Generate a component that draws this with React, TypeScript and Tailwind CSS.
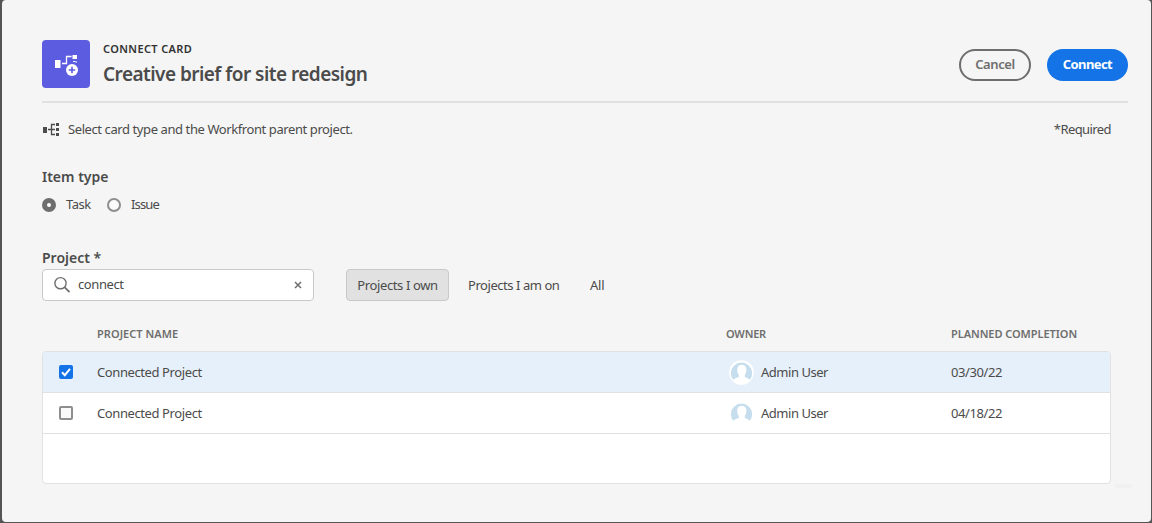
import React from "react";

function ConnectIcon() {
  return (
    <svg width="48" height="48" viewBox="0 0 48 48" fill="none" className="shrink-0 rounded bg-[#5c5ce0]">
      <rect x="13" y="20" width="5.5" height="8" fill="#fff" />
      <path d="M20 23.5h4.500v-7h5" stroke="#fff" strokeWidth="1.300" />
      <rect x="30.500" y="15" width="4.500" height="4" fill="#fff" />
      <path d="M31 21.300l4 .8" stroke="#fff" strokeWidth="1" />
      <circle cx="30" cy="30" r="6" fill="#fff" />
      <path d="M30 26.800v6.400M26.800 30h6.400" stroke="#5c5ce0" strokeWidth="1.600" />
    </svg>
  );
}

function TreeIcon() {
  return (
    <svg width="18" height="16" viewBox="0 0 18 16" fill="none" className="shrink-0">
      <path d="M1 6h4v6H1zM14 2h3v3h-3zM14 7h3v3h-3zM14 12h3v3h-3z" fill="#4b4b4b" />
      <path d="M6 8.500h7M13 3.500H9.500v10H13" stroke="#4b4b4b" strokeWidth="1.300" />
    </svg>
  );
}

function Avatar({ ring }: { ring?: boolean }) {
  return (
    <svg width="25" height="25" viewBox="0 0 25 25" className="shrink-0">
      {ring && <circle cx="12.500" cy="12.500" r="12.300" fill="#fff" />}
      <path d="M4.200 19.800A10.600 10.600 0 1 1 20.800 19.800Q19.500 18.200 15.800 17v-2.200c1.200-1.200 1.600-3 1.600-5.200 0-3-1.900-4.800-4.600-4.800S8.200 6.600 8.200 9.600c0 2.200.4 4 1.600 5.200V17Q5.500 18.200 4.200 19.800z" fill="#c5dded" />
    </svg>
  );
}

function Row({ checked, date }: { checked?: boolean; date: string }) {
  return (
    <div className={`flex h-[41px] items-center border-b border-[#e1e1e1] ${checked ? "bg-[#e6f0fa]" : "bg-white"}`}>
      <div className="w-[54px] pl-4">
        {checked ? (
          <svg width="14" height="14" viewBox="0 0 14 14" fill="none" className="rounded-xs bg-[#1473e6]">
            <path d="M3 7.200l2.800 3L11 3.800" stroke="#fff" strokeWidth="2" />
          </svg>
        ) : (
          <div className="size-[14px] rounded-xs border-2 border-[#8e8e8e] bg-[#fafafa]" />
        )}
      </div>
      <div className="w-[632px] tracking-[-0.4px]">Connected Project</div>
      <div className="flex w-[222px] items-center gap-[7px]">
        <Avatar ring={checked} />
        <span className="tracking-[-0.47px]">Admin User</span>
      </div>
      <div className="tracking-[-0.4px]">{date}</div>
    </div>
  );
}

export default function App() {
  return (
    <div className="h-[523px] w-[1152px] overflow-hidden bg-[#555] pr-px pb-px pl-0.5 font-['Noto_Sans',sans-serif] text-[13px] leading-5 whitespace-nowrap text-[#4b4b4b]">
      <div className="relative h-[522px] rounded bg-[#f5f5f5] pt-10 pr-[23px] pl-10">
        <header className="flex h-[63px] items-start border-b-2 border-[#e1e1e1]">
          <ConnectIcon />
          <div className="ml-[13px] flex-1">
            <div className="h-[18px] text-[11px] leading-[18px] font-semibold tracking-[0.37px] text-[#323232]">CONNECT CARD</div>
            <h1 className="text-[19px] leading-[33px] font-semibold tracking-[-0.54px]">Creative brief for site redesign</h1>
          </div>
          <div className="mt-[9px] flex gap-4">
            <button className="h-8 w-[72px] rounded-full border-2 border-[#6e6e6e] pb-0.5 text-[13px] leading-[26px] font-semibold tracking-[-0.4px] text-[#6e6e6e]">Cancel</button>
            <button className="h-8 w-[81px] rounded-full bg-[#1473e6] pb-0.5 text-[13px] font-bold tracking-[-0.6px] text-white">Connect</button>
          </div>
        </header>

        <div className="mt-4 flex h-5 items-center pr-[17px]">
          <TreeIcon />
          <span className="ml-2 flex-1 tracking-[-0.41px]">Select card type and the Workfront parent project.</span>
          <span className="tracking-[-0.58px]">*Required</span>
        </div>

        <h2 className="mt-[27px] text-[14px] leading-[22px] font-semibold">Item type</h2>
        <div className="mt-[7px] flex h-5 items-center">
          <span className="size-[14px] rounded-full border-[5px] border-[#6e6e6e] bg-white" />
          <span className="ml-[10px] w-[41px] pb-0.5 tracking-[-0.500px]">Task</span>
          <span className="size-[14px] rounded-full border-2 border-[#8e8e8e] bg-[#fafafa]" />
          <span className="ml-[10px] pb-0.5 tracking-[-0.850px]">Issue</span>
        </div>

        <h2 className="mt-8 text-[14px] leading-[22px] font-semibold">Project *</h2>
        <div className="flex h-8 items-center">
          <div className="flex h-8 w-[272px] items-center rounded border border-[#c9c9c9] bg-white pr-[10px] pl-[10px]">
            <svg width="18" height="18" viewBox="0 0 18 18" fill="none" stroke="#6e6e6e" strokeWidth="1.400">
              <circle cx="7.500" cy="7.200" r="5.600" />
              <path d="M11.500 11.200l5 5" strokeWidth="1.700" />
            </svg>
            <span className="ml-[7px] flex-1 pb-0.5 tracking-[-0.400px]">connect</span>
            <svg width="10" height="10" viewBox="0 0 10 10" stroke="#6e6e6e" strokeWidth="1.500">
              <path d="M2 2l6 6M8 2l-6 6" />
            </svg>
          </div>
          <button className="ml-8 h-8 w-[103px] rounded border border-[#c9c9c9] bg-[#e1e1e1] tracking-[-0.38px]">Projects I own</button>
          <button className="ml-[19px] w-[92px] text-left tracking-[-0.45px]">Projects I am on</button>
          <button className="ml-[30px] tracking-[-0.2px]">All</button>
        </div>

        <div className="mt-[23px] flex h-5 pl-[55px] text-[11px] font-semibold text-[#6e6e6e]">
          <div className="w-[629px] tracking-[0.050px]">PROJECT NAME</div>
          <div className="w-[225px] tracking-[-0.200px]">OWNER</div>
          <div className="tracking-[-0.050px]">PLANNED COMPLETION</div>
        </div>
        <div className="mt-[7px] mr-[17px] h-[133px] overflow-hidden rounded border border-[#e1e1e1] bg-white">
          <Row checked date="03/30/22" />
          <Row date="04/18/22" />
        </div>
        <div className="absolute top-[484px] left-[1113px] h-1 w-[17px] bg-[#f1f1f1]" />
      </div>
    </div>
  );
}
